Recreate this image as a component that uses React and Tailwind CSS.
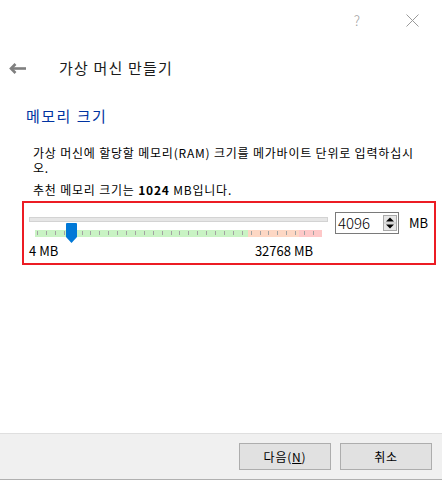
const font = "font-['Noto_Sans_CJK_KR',sans-serif]";

function BackArrow() {
  return (
    <svg width="17" height="11" viewBox="0 0 17 11" fill="none">
      <path d="M2 5.5H17" stroke="#7f7f7f" strokeWidth="2.6" />
      <path d="M6.5 1L2 5.5L6.5 10" stroke="#7f7f7f" strokeWidth="2.6" />
    </svg>
  );
}

function CloseIcon() {
  return (
    <svg width="13" height="13" viewBox="0 0 13 13" fill="none">
      <path d="M0.5 0.5L12.5 12.5M12.5 0.5L0.5 12.5" stroke="#9a9a9a" strokeWidth="1" />
    </svg>
  );
}

function Thumb() {
  return (
    <svg width="11" height="20" viewBox="0 0 11 20">
      <path d="M1 0H10Q11 0 11 1V14L5.5 20L0 14V1Q0 0 1 0Z" fill="#0078d7" />
    </svg>
  );
}

function TickBar() {
  const ticks = [];
  for (let i = 0; i <= 32; i++) ticks.push(2 + i * 8.9);
  return (
    <svg width="287" height="7" viewBox="0 0 287 7">
      <rect x="0" y="0" width="213" height="7" fill="#c9f3c4" />
      <rect x="213" y="0" width="51" height="7" fill="#fdd7c4" />
      <rect x="264" y="0" width="23" height="7" fill="#fec8c8" />
      {ticks.map((x) => (
        <rect key={x} x={Math.round(x)} y="1" width="1" height="4" fill="#a3a3a3" />
      ))}
    </svg>
  );
}

function SpinArrows() {
  return (
    <svg width="14" height="16" viewBox="0 0 14 16">
      <rect x="0.5" y="0.5" width="13" height="15" fill="#e6e6e6" stroke="#a9a9a9" />
      <path d="M3 6.5L7 2.5L11 6.5Z" fill="#000" />
      <path d="M3 9.5L7 13.5L11 9.5Z" fill="#000" />
      <path d="M1 8H13" stroke="#c4c4c4" />
    </svg>
  );
}

function MemorySlider() {
  return (
    <div className="ml-[22px] mt-[4px] flex h-[64px] w-[414px] border-2 border-[#ec1c24]">
      <div className="pl-[5px]">
        <div className="relative w-[299px]">
          <div className="mt-[14px] h-[5px] w-[299px] border border-[#d3d3d3] bg-[#e6e6e6]" />
          <div className="absolute left-[37px] top-[6px] flex">
            <Thumb />
          </div>
          <div className="ml-[6px] mt-[8px] flex">
            <TickBar />
          </div>
          <div className="mt-[6px] flex w-[284px] justify-between text-[13px] leading-[16px] text-black">
            <span>4 MB</span>
            <span>32768 MB</span>
          </div>
        </div>
      </div>
      <div className="ml-[7px] mt-[9px] flex h-[22px] w-[64px] items-center justify-between border border-[#7a7a7a] bg-white pl-[2px] pr-[1px]">
        <span className="text-[15px] leading-[18px] font-light text-black">4096</span>
        <SpinArrows />
      </div>
      <span className="ml-[10px] mt-[12px] text-[13px] leading-[16px] text-black">MB</span>
    </div>
  );
}

export default function App() {
  return (
    <div className={`${font} flex h-[480px] w-[442px] flex-col bg-white`}>
      <div className="flex h-[40px] items-center justify-end">
        <span className="mr-[46px] text-[14px] font-light text-[#a3a3a3]">?</span>
        <div className="mr-[23px] flex">
          <CloseIcon />
        </div>
      </div>

      <div className="mt-[16px] flex h-[24px] items-center">
        <div className="ml-[9px] flex">
          <BackArrow />
        </div>
        <span className="ml-[33px] text-[15px] leading-[20px] tracking-[1.2px] text-[#1a1a1a]">
          가상 머신 만들기
        </span>
      </div>

      <h2 className="ml-[26px] mt-[26px] text-[15px] leading-[20px] font-normal tracking-[1.5px] text-[#0033a1]">
        메모리 크기
      </h2>

      <div className="ml-[33px] mt-[19px] text-[12px] leading-[15px] tracking-[0.8px] text-black">
        <p className="whitespace-nowrap">
          가상 머신에 할당할 메모리(RAM) 크기를 메가바이트 단위로 입력하십시
          <br />
          오.
        </p>
        <p className="mt-[7px] whitespace-nowrap">
          추천 메모리 크기는 <b>1024</b> MB입니다.
        </p>
      </div>

      <MemorySlider />

      <div className="flex-1" />

      <div className="flex h-[47px] justify-end gap-[9px] border-t border-b border-t-[#dfdfdf] border-b-[#b0b0b0] bg-[#f0f0f0] pr-[10px] pt-[9px]">
        <button
          type="button"
          className="h-[27px] w-[92px] border border-[#adadad] bg-[#e1e1e1] text-[12px] tracking-[0.8px] text-black"
        >
          다음(<span className="underline">N</span>)
        </button>
        <button
          type="button"
          className="h-[27px] w-[92px] border border-[#adadad] bg-[#e1e1e1] text-[12px] tracking-[0.8px] text-black"
        >
          취소
        </button>
      </div>
    </div>
  );
}
